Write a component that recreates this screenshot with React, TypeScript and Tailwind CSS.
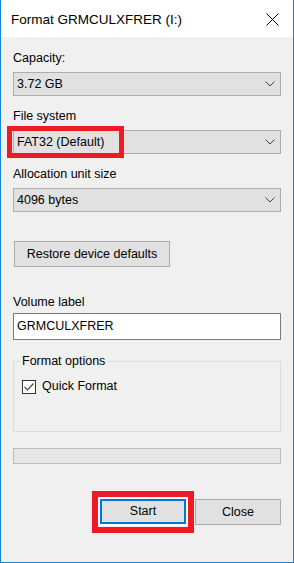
import type { ReactNode } from 'react';

function Chevron() {
  return (
    <svg width="10" height="6" viewBox="0 0 10 6" className="shrink-0">
      <polyline points="0.5,0.5 5,5 9.5,0.5" fill="none" stroke="#444" strokeWidth="1" />
    </svg>
  );
}

function Combo({ value, children }: { value: string; children?: ReactNode }) {
  return (
    <div className="relative mt-[6px] flex h-[24px] items-center justify-between border border-[#adadad] bg-[#e1e1e1] pl-[3px] pr-[5px]">
      <span>{value}</span>
      <Chevron />
      {children}
    </div>
  );
}

export default function App() {
  return (
    <div className="flex h-[563px] w-[294px] flex-col border-x border-b border-[#1883d7] bg-[#f0f0f0] font-['Liberation_Sans',Arial,sans-serif] text-[12.5px] leading-[15px] text-black">
      {/* Title bar */}
      <div className="flex h-[37px] shrink-0 items-center justify-between bg-white pl-[10px] pr-[14px] pt-[2px]">
        <span className="text-[13.5px]">Format GRMCULXFRER (I:)</span>
        <svg width="13" height="13" viewBox="0 0 13 13">
          <line x1="0.5" y1="0.5" x2="12.5" y2="12.5" stroke="#000" strokeWidth="1" />
          <line x1="12.5" y1="0.5" x2="0.5" y2="12.5" stroke="#000" strokeWidth="1" />
        </svg>
      </div>

      {/* Body */}
      <div className="flex flex-1 flex-col px-[12px] pt-[14px]">
        <div>Capacity:</div>
        <Combo value="3.72 GB" />

        <div className="mt-[13px]">File system</div>
        <Combo value="FAT32 (Default)">
          <div className="pointer-events-none absolute -bottom-[5px] -left-[7px] -top-[5px] w-[117px] border-[5px] border-[#ed1c24]" />
        </Combo>

        <div className="mt-[13px]">Allocation unit size</div>
        <Combo value="4096 bytes" />

        <button className="ml-[1px] mt-[29px] h-[26px] w-[156px] self-start border border-[#adadad] bg-[#e1e1e1]">
          Restore device defaults
        </button>

        <div className="mt-[28px]">Volume label</div>
        <div className="mt-[3px] flex h-[27px] items-center border border-[#7a7a7a] bg-white pl-[3px]">
          GRMCULXFRER
        </div>

        <fieldset className="mt-[14px] h-[78px] border border-[#dcdcdc] pl-[6px]">
          <legend className="px-[2px]">Format options</legend>
          <label className="ml-[2px] mt-[10px] flex items-center gap-[6px]">
            <span className="flex h-[14px] w-[14px] items-center justify-center border border-[#333] bg-white">
              <svg width="12" height="12" viewBox="0 0 12 12">
                <polyline points="1.5,6 4.5,9 10.5,2.5" fill="none" stroke="#444" strokeWidth="1.2" />
              </svg>
            </span>
            <span>Quick Format</span>
          </label>
        </fieldset>

        <div className="mt-[16px] h-[16px] border border-[#bcbcbc] bg-[#e6e6e6]" />

        <div className="mt-[35px] flex justify-end gap-[9px]">
          <div className="relative">
            <button className="h-[25px] w-[86px] border-2 border-[#0078d7] bg-[#e1e1e1] shadow-[0_0_0_2px_#fff]">
              Start
            </button>
            <div className="pointer-events-none absolute -inset-[8px] border-[6px] border-[#ed1c24]" />
          </div>
          <button className="h-[26px] w-[86px] border border-[#adadad] bg-[#e1e1e1]">Close</button>
        </div>
      </div>
    </div>
  );
}
